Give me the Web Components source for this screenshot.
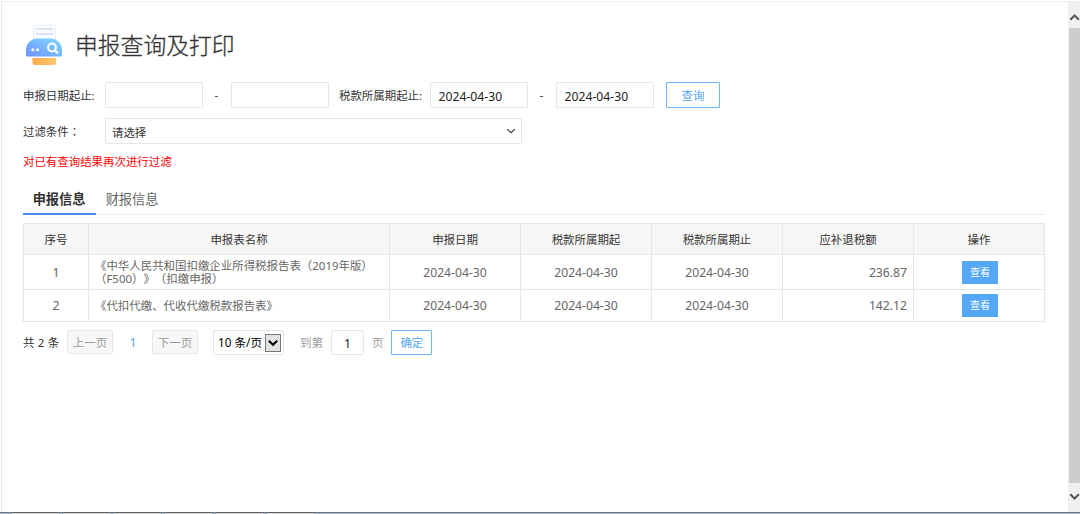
<!DOCTYPE html>
<html lang="zh-CN">
<head>
<meta charset="utf-8">
<title>申报查询及打印</title>
<style>
    html, body {
        margin: 0;
        height: 100%;
        overflow: hidden;
        background: #fff;
    }
    body {
        font-family: "Noto Sans", "Noto Sans CJK SC", sans-serif;
        font-size: 11.45px;
        color: #333;
        text-spacing-trim: space-all;
    }
    .row {
        display: flex;
        align-items: center;
        height: 26px;
    }
    .row + .row {
        margin-top: 10px;
    }
    .row > .label {
        width: 82px;
        white-space: nowrap;
    }
    .row > .label.mid {
        width: 91px;
        margin-left: 10px;
    }
    .colon {
        font-family: "Noto Sans CJK TC", sans-serif;
    }
    .notice {
        height: 16px;
        line-height: 16px;
        margin-top: 10px;
        color: #f00;
    }
    tab-bar {
        margin-top: 13px;
    }
    declare-table {
        margin-top: 8px;
    }
    table-pager {
        margin-top: 8px;
    }
</style>
</head>
<body>

<app-window>
    <page-title>申报查询及打印</page-title>

    <div class="row">
        <span class="label">申报日期起止:</span>
        <date-range></date-range>
        <span class="label mid">税款所属期起止:</span>
        <date-range from="2024-04-30" to="2024-04-30"></date-range>
        <line-button style="margin-left: 12px">查询</line-button>
    </div>
    <div class="row">
        <span class="label">过滤条件<span class="colon" lang="zh-TW">：</span></span>
        <drop-down>请选择</drop-down>
    </div>
    <div class="notice">对已有查询结果再次进行过滤</div>

    <tab-bar>
        <tab-item active>申报信息</tab-item>
        <tab-item>财报信息</tab-item>
    </tab-bar>

    <declare-table></declare-table>
    <table-pager total="2" page="1" size="10"></table-pager>
</app-window>

<script>

// attaches an open shadow root filled with the given markup
function render(el, html) {
    const template = document.createElement('template')
    template.innerHTML = html
    el.attachShadow({ mode: 'open' }).appendChild(template.content.cloneNode(true))
}


// frame with the scrollbar on the right and the strip of the taskbar below
class AppWindow extends HTMLElement {
    constructor() {
        super()
        render(this, `<style>
            :host {
                display: grid;
                grid-template: minmax(0, 1fr) 2px / minmax(0, 1fr) 12px;
                height: 100vh;
            }
            main {
                margin: 1px 0 0 1px;
                padding: 22px 23px 0 21px;
                border-left: 1px solid #e8e8e8;
                border-top: 1px solid #f0f0f0;
            }
            .bottom {
                grid-column: 1 / 3;
                display: flex;
                gap: 4px;
                padding-left: 12px;
                background: #a4b2c2;
                border-top: 1px solid #6f7784;
                height: 1px;
            }
            .bottom i {
                width: 47px;
                background: #dcdcdc;
                box-shadow: 0 -1px #5c5f64;
            }
        </style>
        <main><slot></slot></main>
        <scroll-bar></scroll-bar>
        <div class="bottom"><i></i><i></i><i></i><i></i><i></i><i></i></div>`)
    }
}


class ScrollBar extends HTMLElement {
    constructor() {
        super()
        render(this, `<style>
            :host {
                display: flex;
                flex-direction: column;
                background: #f0f0f0;
                margin-top: 1px;
            }
            svg {
                flex: none;
                display: block;
            }
            .thumb {
                flex: 1;
                margin-left: 1px;
                background: #cdcdcd;
            }
        </style>
        <svg width="12" height="27"><path d="M2.3 18.8 6.6 14.5 10.9 18.8" fill="none" stroke="#555" stroke-width="2"/></svg>
        <div class="thumb"></div>
        <svg width="12" height="29"><path d="M2.3 11.2 6.6 15.5 10.9 11.2" fill="none" stroke="#555" stroke-width="2"/></svg>`)
    }
}


class PageTitle extends HTMLElement {
    constructor() {
        super()
        render(this, `<style>
            :host {
                display: flex;
                align-items: center;
                height: 42px;
                margin-bottom: 16px;
                font-size: 22.8px;
                font-weight: 300;
                color: #333;
                -webkit-text-stroke: .3px #333;
            }
            svg {
                margin: 0 11px 0 3px;
            }
            span {
                line-height: 42px;
                padding-top: 2px;
            }
        </style>
        <svg width="38" height="42" viewBox="0 .5 38 42">
            <defs>
                <linearGradient id="body" x1="0" y1="1" x2="1" y2="0">
                    <stop offset="0" stop-color="#6f91ff"/>
                    <stop offset="1" stop-color="#7fdcff"/>
                </linearGradient>
                <linearGradient id="tray">
                    <stop offset="0" stop-color="#ffab4b"/>
                    <stop offset="1" stop-color="#ffc670"/>
                </linearGradient>
            </defs>
            <rect x="7.5" y="1.700" width="22" height="19" rx="1.5" fill="#fafbff" stroke="#e9edf7"/>
            <path d="M10.5 5.500h15.5M10.5 10.500h15.5" stroke="#dde3f2" stroke-width="2" stroke-linecap="round"/>
            <path d="M0 32V26.500A11.500 11.500 0 0 1 11.500 15H24.500A11.500 11.500 0 0 1 36 26.500V32Q36 33 35 33H1Q0 33 0 32Z" fill="url(#body)"/>
            <circle cx="6.800" cy="26.200" r="1.500" fill="#fff"/>
            <circle cx="11.600" cy="26.200" r="1.500" fill="#fff"/>
            <circle cx="26" cy="24" r="3.900" fill="none" stroke="#fff" stroke-width="2"/>
            <path d="M28.800 26.800 31.300 29.300" stroke="#fff" stroke-width="2.200" stroke-linecap="round"/>
            <path d="M6.500 34.500H30V39.500Q30 41.500 28 41.500H8.500Q6.500 41.500 6.500 39.500Z" fill="url(#tray)"/>
        </svg>
        <span><slot></slot></span>`)
    }
}


// two date boxes with a dash between them
class DateRange extends HTMLElement {
    constructor() {
        super()
        const from = this.getAttribute('from') || ''
        const to = this.getAttribute('to') || ''
        render(this, `<style>
            :host {
                display: flex;
                align-items: center;
                font-size: 12.2px;
                color: #222;
            }
            .box {
                box-sizing: border-box;
                width: 98px;
                height: 26px;
                line-height: 27px;
                padding-left: 7.5px;
                border: 1px solid #e6e6e6;
                border-radius: 1px;
            }
            .dash {
                width: 27px;
                padding-right: 1px;
                text-align: center;
                color: #555;
            }
        </style>
        <div class="box">${from}</div>
        <div class="dash">-</div>
        <div class="box">${to}</div>`)
    }
}


class LineButton extends HTMLElement {
    constructor() {
        super()
        render(this, `<style>
            :host {
                display: block;
                box-sizing: border-box;
                width: var(--w, 54px);
                height: var(--h, 26px);
                line-height: calc(var(--h, 26px) - 1px);
                text-align: center;
                border: 1px solid #6bb6f7;
                border-radius: 1px;
                color: #54a8f5;
                cursor: pointer;
            }
        </style><slot></slot>`)
    }
}


class DropDown extends HTMLElement {
    constructor() {
        super()
        render(this, `<style>
            :host {
                display: flex;
                align-items: center;
                justify-content: space-between;
                box-sizing: border-box;
                width: 417px;
                height: 26px;
                padding: 1px 5px 0 6px;
                border: 1px solid #e6e6e6;
                border-radius: 1px;
            }
        </style>
        <span><slot></slot></span>
        <svg width="10" height="8"><path d="M1.300 1.200 5 4.700 8.700 1.200" fill="none" stroke="#444" stroke-width="1.200"/></svg>`)
    }
}


class TabBar extends HTMLElement {
    constructor() {
        super()
        render(this, `<style>
            :host {
                display: flex;
                box-sizing: border-box;
                height: 32px;
                padding-top: 3px;
                border-bottom: 1px solid #ececec;
            }
        </style><slot></slot>`)
    }
}


class TabItem extends HTMLElement {
    constructor() {
        super()
        render(this, `<style>
            :host {
                display: block;
                box-sizing: border-box;
                width: 73px;
                height: 29px;
                padding-right: 1px;
                line-height: 26px;
                text-align: center;
                font-size: 13.2px;
                color: #666;
            }
            :host([active]) {
                font-weight: bold;
                color: #333;
                border-bottom: 2px solid #4a8df0;
            }
        </style><slot></slot>`)
    }
}


class DeclareTable extends HTMLElement {

    #_heads = ['序号', '申报表名称', '申报日期', '税款所属期起', '税款所属期止', '应补退税额', '操作']
    #_rows = [
        ['1', '《中华人民共和国扣缴企业所得税报告表（2019年版）<br>（F500）》（扣缴申报）', '2024-04-30', '2024-04-30', '2024-04-30', '236.87'],
        ['2', '《代扣代缴、代收代缴税款报告表》', '2024-04-30', '2024-04-30', '2024-04-30', '142.12'],
    ]

    constructor() {
        super()
        const classes = ['', 'name', '', '', '', 'money']
        const head = this.#_heads.map(h => `<div class="head">${h}</div>`).join('')
        const body = this.#_rows.map(row =>
            row.map((c, i) => `<div class="${classes[i]}"><span>${c}</span></div>`).join('')
            + '<div class="action"><button>查看</button></div>'
        ).join('')

        render(this, `<style>
            :host {
                display: grid;
                grid-template-columns: 65px 301px repeat(5, 131px);
                grid-template-rows: 31px 35px 32px;
                width: 1021px;
                border: 1px solid #e6e6e6;
                border-width: 1px 0 0 1px;
                font-size: 12.2px;
                color: #666;
            }
            div {
                display: flex;
                align-items: center;
                justify-content: center;
                border: 1px solid #e6e6e6;
                border-width: 0 1px 1px 0;
            }
            .head {
                background: #f6f6f6;
                font-size: 11.45px;
                color: #333;
            }
            .name {
                justify-content: flex-start;
                padding-left: 6px;
                font-size: 11.45px;
                line-height: 13px;
                white-space: nowrap;
            }
            .money {
                justify-content: flex-end;
                padding-right: 6px;
            }
            .action {
                padding-left: 2px;
            }
            button {
                width: 36px;
                height: 23px;
                padding: 0;
                border: 0;
                border-radius: 1px;
                background: #54a8f5;
                color: #fff;
                font: inherit;
                font-size: 10px;
                line-height: 23px;
            }
        </style>${head}${body}`)
    }
}


class TablePager extends HTMLElement {
    constructor() {
        super()
        const total = this.getAttribute('total')
        const page = this.getAttribute('page')
        const size = this.getAttribute('size')
        render(this, `<style>
            :host {
                display: flex;
                align-items: flex-start;
                height: 25px;
                white-space: nowrap;
            }
            div {
                box-sizing: border-box;
                height: 25px;
                line-height: 25px;
                text-align: center;
            }
            .total { width: 44px; text-align: left; word-spacing: .4px; }
            .step {
                width: 46px;
                height: 24px;
                line-height: 23px;
                border: 1px solid #e6e6e6;
                border-radius: 2px;
                background: #f7f7f7;
                color: #999;
            }
            .current {
                width: 39px;
                padding-left: 1px;
                font-size: 12.2px;
                color: #54a8f5;
            }
            .size {
                display: flex;
                align-items: center;
                justify-content: space-between;
                width: 71px;
                margin-left: 15px;
                padding: 0 2px 0 4px;
                border: 1px solid #e6e6e6;
                border-radius: 2px;
                font-size: 11.7px;
                color: #000;
            }
            .size svg {
                background: #e3e3e3;
            }
            .gray { color: #999; }
            .page {
                width: 33px;
                margin-left: 8px;
                border: 1px solid #e6e6e6;
                border-radius: 2px;
                font-size: 12.2px;
                color: #222;
            }
            line-button {
                --w: 41px;
                --h: 25px;
                margin-left: 8px;
            }
        </style>
        <div class="total">共 ${total} 条</div>
        <div class="step">上一页</div>
        <div class="current">${page}</div>
        <div class="step">下一页</div>
        <div class="size">
            <span>${size} 条/页</span>
            <svg width="16" height="18">
                <rect x=".5" y=".5" width="15" height="17" fill="none" stroke="#777"/>
                <path d="M3.800 6.800 8 10.800 12.200 6.800" fill="none" stroke="#000" stroke-width="2"/>
            </svg>
        </div>
        <div class="gray" style="margin-left: 16px">到第</div>
        <div class="page">${page}</div>
        <div class="gray" style="margin-left: 8px">页</div>
        <line-button>确定</line-button>`)
    }
}


customElements.define('app-window', AppWindow)
customElements.define('scroll-bar', ScrollBar)
customElements.define('page-title', PageTitle)
customElements.define('date-range', DateRange)
customElements.define('line-button', LineButton)
customElements.define('drop-down', DropDown)
customElements.define('tab-bar', TabBar)
customElements.define('tab-item', TabItem)
customElements.define('declare-table', DeclareTable)
customElements.define('table-pager', TablePager)
</script>
</body>
</html>
